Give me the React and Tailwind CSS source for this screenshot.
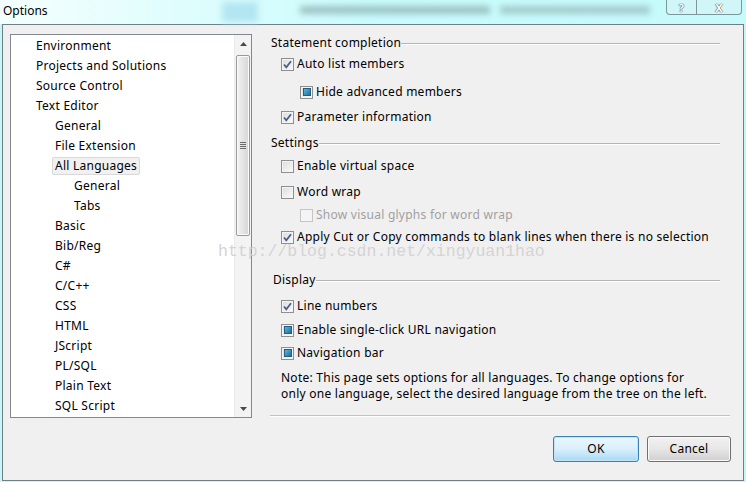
import React from "react";

const treeItems = [
  { label: "Environment", level: 0 },
  { label: "Projects and Solutions", level: 0 },
  { label: "Source Control", level: 0 },
  { label: "Text Editor", level: 0 },
  { label: "General", level: 1 },
  { label: "File Extension", level: 1 },
  { label: "All Languages", level: 1, selected: true },
  { label: "General", level: 2 },
  { label: "Tabs", level: 2 },
  { label: "Basic", level: 1 },
  { label: "Bib/Reg", level: 1 },
  { label: "C#", level: 1 },
  { label: "C/C++", level: 1 },
  { label: "CSS", level: 1 },
  { label: "HTML", level: 1 },
  { label: "JScript", level: 1 },
  { label: "PL/SQL", level: 1 },
  { label: "Plain Text", level: 1 },
  { label: "SQL Script", level: 1 },
];

const levelPad = ["pl-[25px]", "pl-[41px]", "pl-[63px]"];

function CheckBox({ state, disabled }) {
  return (
    <span
      className={`shrink-0 w-[13px] h-[13px] border flex items-center justify-center ${
        disabled
          ? "border-[#c5c5c5] bg-[#f4f4f4]"
          : "border-[#8e8f8f] bg-gradient-to-br from-[#dcdcdc] to-[#fbfbfb] shadow-[inset_0_0_0_1px_#f4f4f4]"
      }`}
    >
      {state === "checked" && (
        <svg width="11" height="11" viewBox="0 0 11 11">
          <path d="M2 5.5 L4.3 8.3 L9 2.3" fill="none" stroke="#4b5e8c" strokeWidth="1.8" />
        </svg>
      )}
      {state === "filled" && (
        <span className="w-[8px] h-[8px] border border-[#235d83] bg-gradient-to-br from-[#5cb6dc] to-[#1d6f9d]" />
      )}
    </span>
  );
}

function Row({ state, disabled, sub, mt, children }) {
  return (
    <div className={`flex items-center h-4 ${sub ? "pl-[29px]" : "pl-[10px]"} ${mt}`}>
      <CheckBox state={state} disabled={disabled} />
      <span className={`ml-[3px] whitespace-nowrap ${disabled ? "text-[#a0a0a0]" : "text-black"}`}>
        {children}
      </span>
    </div>
  );
}

function Header({ mt, pad, children }) {
  return (
    <div className={`flex items-center h-4 ${mt} ${pad}`}>
      <span className="whitespace-nowrap">{children}</span>
      <span className="flex-1 h-[2px] border-t border-[#b5b5b5] border-b border-b-white mt-[1px]" />
    </div>
  );
}

export default function App() {
  return (
    <div
      className="relative w-[746px] h-[482px] overflow-hidden bg-[#c8f6f8] text-[12px] tracking-[0.25px] text-black"
      style={{ fontFamily: '"Noto Sans", "Open Sans", sans-serif' }}
    >
      {/* title bar */}
      <div className="relative h-[24px] flex items-center bg-gradient-to-r from-[#f4fefe] via-[#c9fcfc] to-[#c6fafb]">
        <div className="absolute left-[222px] top-[2px] w-[36px] h-[20px] bg-[#b3e6f2] blur-[3px]" />
        <div className="absolute left-[300px] top-[6px] w-[190px] h-[8px] bg-[#7c9aa0] opacity-60 blur-[3px]" />
        <div className="absolute left-[500px] top-[6px] w-[150px] h-[8px] bg-[#7c9aa0] opacity-50 blur-[3px]" />
        <span className="relative pl-[3px] pb-[3px] text-[12px] tracking-normal text-black">Options</span>
        <div className="absolute right-[4px] top-0 flex">
          <div className="w-[31px] h-[15px] border border-t-0 border-[#7d969c] rounded-bl-[4px] bg-[#d6f4f6]/70 flex items-center justify-center text-[11px] leading-none font-bold text-white [text-shadow:0_0_1px_#333,0_0_1px_#333]">
            ?
          </div>
          <div className="w-[45px] h-[15px] border border-t-0 border-l-0 border-[#7d969c] rounded-br-[4px] bg-[#d6f4f6]/70 flex items-center justify-center text-[11px] leading-none font-bold text-white [text-shadow:0_0_1px_#333,0_0_1px_#333]">
            X
          </div>
        </div>
      </div>

      {/* dialog body */}
      <div className="ml-[2px] w-[742px] h-[457px] border border-[#6f7f86] bg-[#f0f0f0] pt-[9px] pl-[7px] pr-[12px]">
        <div className="flex">
          {/* tree */}
          <div className="w-[242px] h-[384px] border border-[#828790] bg-white flex">
            <div className="flex-1 pt-[1px] overflow-hidden">
              {treeItems.map((item, i) => (
                <div key={i} className={`h-[20px] flex items-center ${levelPad[item.level]}`}>
                  {item.selected ? (
                    <span className="h-[18px] flex items-center px-[2px] border border-[#d9d9d9] rounded-[2px] bg-[#f1f1f1]">
                      {item.label}
                    </span>
                  ) : (
                    <span className={item.level === 1 ? "pl-[3px]" : ""}>{item.label}</span>
                  )}
                </div>
              ))}
            </div>
            <div className="w-[17px] h-full bg-[#f3f3f3] border-l border-[#ebebeb] flex flex-col">
              <div className="h-[17px] flex items-center justify-center">
                <svg width="7" height="4" viewBox="0 0 7 4">
                  <path d="M0 4 L3.5 0 L7 4 Z" fill="#4a4a4a" />
                </svg>
              </div>
              <div className="mt-[3px] ml-[1px] w-[14px] h-[181px] border border-[#9a9a9a] rounded-[2px] bg-gradient-to-r from-[#f2f2f2] to-[#d6d6d6] shadow-[inset_0_0_0_1px_#fbfbfb] flex items-center justify-center">
                <div className="flex flex-col gap-[1px]">
                  <span className="block w-[6px] h-px bg-[#6a6a6a]" />
                  <span className="block w-[6px] h-px bg-[#6a6a6a]" />
                  <span className="block w-[6px] h-px bg-[#6a6a6a]" />
                  <span className="block w-[6px] h-px bg-[#6a6a6a]" />
                </div>
              </div>
              <div className="flex-1" />
              <div className="h-[17px] flex items-center justify-center">
                <svg width="7" height="4" viewBox="0 0 7 4">
                  <path d="M0 0 L3.5 4 L7 0 Z" fill="#4a4a4a" />
                </svg>
              </div>
            </div>
          </div>

          {/* options panel */}
          <div className="ml-[18px] w-[460px] h-[384px] flex flex-col">
            <div className="pl-[1px] pr-[10px] pt-[1px]">
              <Header mt="mt-0">Statement completion</Header>
              <Row state="checked" mt="mt-[5px]">Auto list members</Row>
              <Row state="filled" sub mt="mt-[12px]">Hide advanced members</Row>
              <Row state="checked" mt="mt-[9px]">Parameter information</Row>

              <Header mt="mt-[10px]">Settings</Header>
              <Row mt="mt-[7px]">Enable virtual space</Row>
              <Row mt="mt-[10px]">Word wrap</Row>
              <Row sub disabled mt="mt-[7px]">Show visual glyphs for word wrap</Row>
              <Row state="checked" mt="mt-[6px]">
                Apply Cut or Copy commands to blank lines when there is no selection
              </Row>

              <Header mt="mt-[27px]" pad="pl-[2px]">Display</Header>
              <Row state="checked" mt="mt-[10px]">Line numbers</Row>
              <Row state="filled" mt="mt-[8px]">Enable single-click URL navigation</Row>
              <Row state="filled" mt="mt-[7px]">Navigation bar</Row>
              <p className="mt-[9px] pl-[10px] leading-4">
                Note: This page sets options for all languages. To change options for
                <br />
                only one language, select the desired language from the tree on the left.
              </p>
            </div>
            <div className="mt-auto mb-px h-[2px] border-t border-[#c3c3c3] border-b border-b-white" />
          </div>
        </div>

        {/* buttons */}
        <div className="mt-[18px] flex justify-end gap-[8px]">
          <button className="w-[86px] h-[26px] rounded-[3px] border border-[#3c7fb1] bg-gradient-to-b from-[#eaf6fd] via-[#d9f0fc] to-[#a7d9f5] shadow-[inset_0_0_0_1px_#c2e4f6] text-[12px] text-black">
            OK
          </button>
          <button className="w-[84px] h-[26px] rounded-[3px] border border-[#707070] bg-gradient-to-b from-[#f2f2f2] via-[#e6e6e6] to-[#d0d0d0] shadow-[inset_0_0_0_1px_#fafafa] text-[12px] text-black">
            Cancel
          </button>
        </div>
      </div>

      {/* watermark overlay */}
      <div
        className="absolute left-[218px] top-[241px] text-[16.5px] leading-[22px] tracking-normal text-[#d4d4d4] pointer-events-none whitespace-nowrap"
        style={{ fontFamily: '"Liberation Mono", monospace' }}
      >
        http://blog.csdn.net/xingyuan1hao
      </div>
    </div>
  );
}
